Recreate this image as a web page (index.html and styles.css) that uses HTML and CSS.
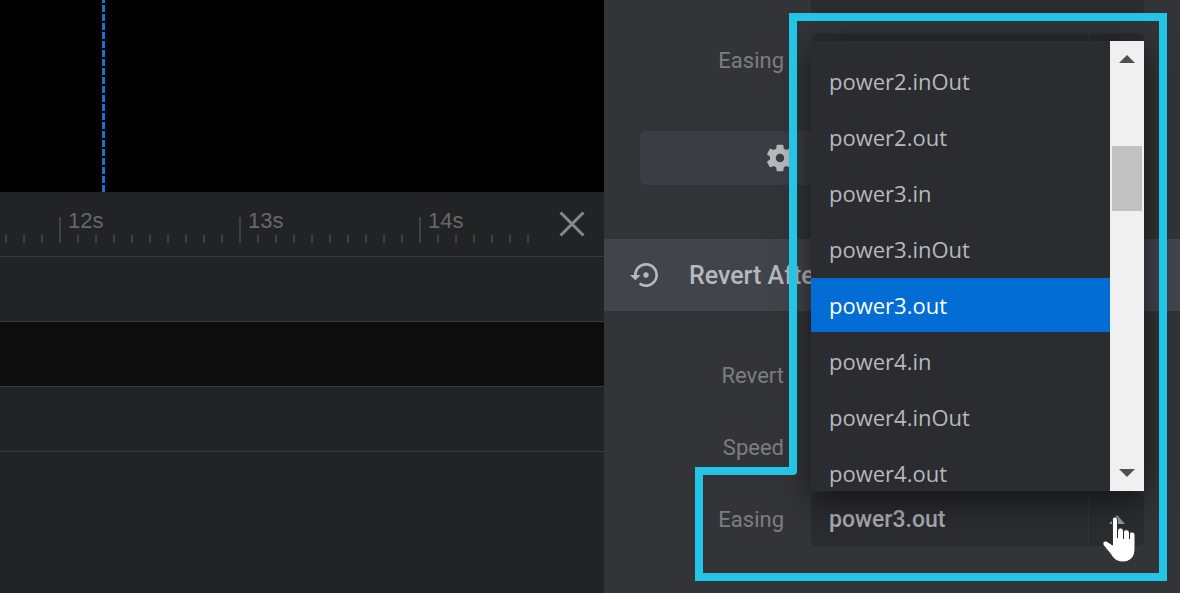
FILE: index.html
```html
<!DOCTYPE html>
<html lang="en">
<head>
    <meta charset="UTF-8">
    <meta name="viewport" content="width=device-width, initial-scale=1.0">
    <title>Animation Editor</title>
    <link rel="stylesheet" href="styles.css">
</head>
<body>

    <main class="timeline">
        <div class="preview">
            <div class="playhead"></div>
        </div>
        <div class="ruler">
            <div class="ticks">
                <span class="second">12s</span>
                <span class="second">13s</span>
                <span class="second">14s</span>
            </div>
            <button class="close" type="button" aria-label="Close timeline">
                <svg width="26" height="26" viewBox="0 0 26 26"><path d="M1.500 1.500l23 23M24.500 1.500l-23 23" stroke="#87888a" stroke-width="3"/></svg>
            </button>
        </div>
        <div class="track"></div>
        <div class="track active"></div>
        <div class="track"></div>
    </main>

    <aside class="panel">
        <div class="fields top-fields">
            <div class="row">
                <input class="field" type="text" aria-label="Duration">
            </div>
            <div class="row">
                <label for="easing-in">Easing</label>
                <div class="select field">
                    <select id="easing-in"></select>
                    <span class="arrow"></span>
                </div>
            </div>
        </div>

        <button class="settings" type="button" aria-label="Advanced settings">
            <svg width="32" height="32" viewBox="0 0 24 24"><path fill="#b7b8bc" d="M19.430 12.980c.04-.32.07-.64.07-.98s-.03-.66-.07-.98l2.110-1.650c.19-.15.24-.42.12-.64l-2-3.460c-.12-.22-.39-.3-.61-.22l-2.490 1c-.52-.4-1.080-.73-1.690-.98l-.38-2.650A.49.49 0 0 0 14 2h-4c-.25 0-.46.18-.49.42l-.38 2.650c-.61.25-1.170.59-1.690.98l-2.490-1c-.23-.09-.49 0-.61.22l-2 3.460c-.13.22-.07.49.12.64l2.110 1.650c-.04.32-.07.65-.07.98s.03.66.07.98l-2.110 1.650c-.19.15-.24.42-.12.64l2 3.460c.12.22.39.3.61.22l2.490-1c.52.4 1.080.73 1.690.98l.38 2.650c.03.24.24.42.49.42h4c.25 0 .46-.18.49-.42l.38-2.650c.61-.25 1.170-.59 1.690-.98l2.490 1c.23.09.49 0 .61-.22l2-3.460c.12-.22.07-.49-.12-.64zM12 15.200a3.200 3.200 0 1 1 0-6.400 3.200 3.200 0 0 1 0 6.400z"/></svg>
        </button>

        <h2 class="section-title">
            <svg width="32" height="32" viewBox="0 0 24 24"><path fill="#b7b8bc" d="M14 12a2 2 0 1 0-4 0 2 2 0 0 0 4 0zM12 3a9 9 0 0 0-9 9H0l4 4 4-4H5a7 7 0 1 1 2.940 5.700l-1.420 1.440A9 9 0 1 0 12 3z"/></svg>
            Revert After
        </h2>

        <div class="fields">
            <div class="row">
                <label for="revert">Revert</label>
                <input class="field" id="revert" type="text">
            </div>
            <div class="row">
                <label for="speed">Speed</label>
                <input class="field" id="speed" type="text">
            </div>
            <div class="row">
                <label for="easing-out">Easing</label>
                <div class="select field">
                    <select id="easing-out">
                        <option selected>power3.out</option>
                    </select>
                    <span class="arrow"></span>
                    <div class="menu">
                        <ul class="options" role="listbox" aria-label="Easing">
                            <li role="option">power2.inOut</li>
                            <li role="option">power2.out</li>
                            <li role="option">power3.in</li>
                            <li role="option">power3.inOut</li>
                            <li role="option" class="selected" aria-selected="true">power3.out</li>
                            <li role="option">power4.in</li>
                            <li role="option">power4.inOut</li>
                            <li role="option">power4.out</li>
                        </ul>
                        <div class="scrollbar">
                            <span class="up"></span>
                            <span class="thumb"></span>
                            <span class="down"></span>
                        </div>
                    </div>
                </div>
            </div>
        </div>

        <!-- callout around the easing menu -->
        <svg class="callout" width="576" height="593" viewBox="0 0 576 593">
            <path d="M189 471V17H559V577H95V471H189" fill="none" stroke="#23c5e6" stroke-width="8" stroke-linecap="round"/>
        </svg>

        <svg class="pointer" width="36" height="50" viewBox="0 0 36 50">
            <path d="M10.500 31V6C10.500 2 15.500 2 15.500 6V17C16 13 21 13 21.500 17V18C22 15 27 15 27.500 19V20C28 17 33 17.500 33 21.500V35C33 43 28 48 21 48C14 48 11 44 8.500 40L1.500 31.500C-.5 28 3 25.500 6 28Z" fill="#fff" stroke="#303134" stroke-width="1"/>
            <path d="M15.500 15v9M21.500 17v8M27.500 19v6" stroke="#26272a" stroke-width="1"/>
        </svg>
    </aside>

</body>
</html>
```
FILE: styles.css
```css
* {
    box-sizing: border-box;
}

body {
    margin: 0;
    min-height: 100vh;
    display: flex;
    background-color: #222325;
    font-family: Roboto, sans-serif;
    font-size: 22px;
    overflow: hidden;
}

button {
    border: none;
    padding: 0;
    background-color: transparent;
    cursor: pointer;
}

/* timeline */
.timeline {
    flex: 1;
    min-width: 0;
}

.preview {
    height: 192px;
    padding-left: 102px;
    background-color: #000;
}

.playhead {
    width: 3px;
    height: 100%;
    background: repeating-linear-gradient(#1b72c8 0 7px, transparent 7px 9px) 0 -4px;
    background-size: 3px 9px;
}

.ruler {
    display: flex;
    height: 65px;
    border-bottom: 1px solid #3a3b3d;
}

.ticks {
    flex: 1;
    min-width: 0;
    display: flex;
    align-items: flex-start;
    margin-bottom: 13px;
    padding: 25px 0 0 59px;
    background: linear-gradient(90deg, #404143 2px, transparent 2px) 5px 100% / 18px 8px repeat-x;
    overflow: hidden;
}

.second {
    flex: 0 0 180px;
    height: 26px;
    padding-left: 7px;
    border-left: 2px solid #404143;
    color: #67686a;
    font-family: "Liberation Sans", Arial, sans-serif;
    line-height: 8px;
}

.close {
    width: 64px;
    line-height: 0;
}

.track {
    height: 65px;
    border-bottom: 1px solid #3a3b3d;
}

.track.active {
    background-color: #0d0d0d;
}

/* settings panel */
.panel {
    position: relative;
    width: 576px;
    background-color: #333437;
    color: #7c7e84;
}

.fields {
    display: flex;
    flex-direction: column;
    gap: 18px;
    padding: 37px 36px;
}

.top-fields {
    margin-top: -39px;
    padding: 0 36px 44px;
}

.row {
    display: flex;
    align-items: center;
    justify-content: flex-end;
    height: 54px;
}

.row label {
    width: 144px;
    margin-right: 27px;
    text-align: right;
}

.field {
    width: 333px;
    height: 54px;
    border: none;
    border-radius: 6px;
    background-color: #2b2c2f;
}

.select {
    position: relative;
    display: flex;
}

.select select {
    flex: 1;
    padding: 0 18px;
    border: none;
    border-right: 1px solid #323336;
    background: transparent;
    appearance: none;
    color: #a9aaae;
    font: 500 23px Roboto, sans-serif;
}

.arrow {
    width: 55px;
    display: flex;
    align-items: center;
    justify-content: center;
}

.arrow::before {
    content: "";
    border: 8px solid transparent;
    border-top: none;
    border-bottom: 9px solid #97989b;
}

.top-fields .arrow::before {
    display: none;
}

.settings {
    display: flex;
    align-items: center;
    width: 504px;
    height: 54px;
    margin: 0 36px;
    padding-left: 124px;
    border-radius: 6px;
    background-color: #3b3d45;
}

.section-title {
    display: flex;
    align-items: center;
    gap: 27px;
    height: 72px;
    margin: 54px 0 0;
    padding-left: 26px;
    background-color: #41444b;
    color: #b7b8bc;
    font-size: 25px;
    font-weight: 500;
}

/* open easing menu */
.menu {
    position: absolute;
    bottom: calc(100% + 1px);
    left: 0;
    width: 100%;
    height: 450px;
    display: flex;
    background-color: #2b2c2f;
    box-shadow: 0 8px 32px rgba(0, 0, 0, 0.6);
    overflow: hidden;
}

.options {
    flex: 1;
    display: flex;
    flex-direction: column;
    gap: 2px;
    margin: 0;
    padding: 13px 0 0;
    list-style: none;
    color: #b7b8bc;
    font-family: "Open Sans", sans-serif;
    line-height: 54px;
}

.options li {
    flex: none;
    height: 54px;
    padding-left: 18px;
}

.options .selected {
    background-color: #006cd4;
    color: #fff;
}

.scrollbar {
    width: 34px;
    display: flex;
    flex-direction: column;
    align-items: center;
    padding: 14px 2px;
    background-color: #f0f0f0;
}

.up,
.down {
    border: 8px solid transparent;
}

.up {
    border-top: none;
    border-bottom-color: #505050;
}

.down {
    margin-top: auto;
    border-bottom: none;
    border-top-color: #505050;
}

.thumb {
    width: 30px;
    height: 65px;
    margin-top: 83px;
    background-color: #c1c1c1;
}

.callout {
    position: absolute;
    top: 0;
    left: 0;
    pointer-events: none;
}

.pointer {
    position: absolute;
    top: 514px;
    left: 498px;
    pointer-events: none;
}
```
